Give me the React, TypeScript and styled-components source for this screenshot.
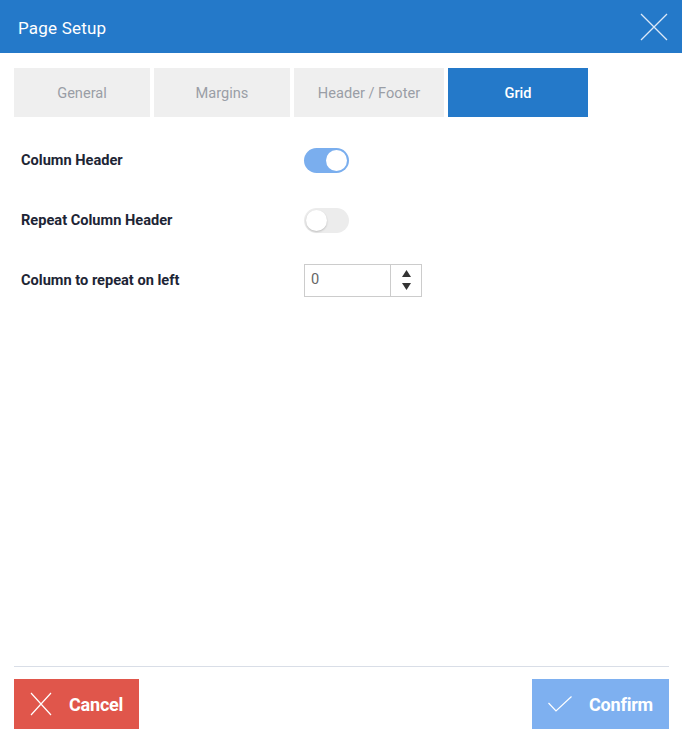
import React, { useState } from 'react'
import styled, { createGlobalStyle } from 'styled-components'

const GlobalStyle = createGlobalStyle`
  html, body {
    margin: 0;
    padding: 0;
    background: #ffffff;
  }
  body {
    font-family: Roboto, "Liberation Sans", sans-serif;
  }
`

const tabs = [
	{ label: 'General', width: 136 },
	{ label: 'Margins', width: 136 },
	{ label: 'Header / Footer', width: 150 },
	{ label: 'Grid', width: 140 },
]

const App = () => {
	const [active, setActive] = useState('Grid')
	const [columnHeader, setColumnHeader] = useState(true)
	const [repeatHeader, setRepeatHeader] = useState(false)
	const [repeatLeft, setRepeatLeft] = useState(0)

	return (
		<>
			<GlobalStyle/>
			<Dialog>
				<TitleBar>
					<Title>Page Setup</Title>
					<CloseButton>
						<svg width='28' height='28' viewBox='0 0 28 28'>
							<path d='M1 1 L27 27 M27 1 L1 27' stroke='#dce9f7' strokeWidth='1.3' fill='none'/>
						</svg>
					</CloseButton>
				</TitleBar>

				<TabRow>
					{ tabs.map(t => (
						<Tab key={ t.label } $width={ t.width } $active={ active === t.label } onClick={ () => setActive(t.label) }>
							{ t.label }
						</Tab>
					)) }
				</TabRow>

				<Body>
					<Row>
						<Label>Column Header</Label>
						<Toggle $on={ columnHeader } onClick={ () => setColumnHeader(!columnHeader) }>
							<Knob $on={ columnHeader }/>
						</Toggle>
					</Row>
					<Row>
						<Label>Repeat Column Header</Label>
						<Toggle $on={ repeatHeader } onClick={ () => setRepeatHeader(!repeatHeader) }>
							<Knob $on={ repeatHeader }/>
						</Toggle>
					</Row>
					<Row>
						<Label>Column to repeat on left</Label>
						<Spinner>
							<SpinInput value={ repeatLeft } readOnly/>
							<SpinButtons>
								<SpinArrow onClick={ () => setRepeatLeft(repeatLeft + 1) }>
									<svg width='9' height='7' viewBox='0 0 9 7'><path d='M4.5 0 L9 7 L0 7 Z' fill='#333'/></svg>
								</SpinArrow>
								<SpinArrow onClick={ () => setRepeatLeft(Math.max(0, repeatLeft - 1)) }>
									<svg width='9' height='7' viewBox='0 0 9 7'><path d='M0 0 L9 0 L4.5 7 Z' fill='#333'/></svg>
								</SpinArrow>
							</SpinButtons>
						</Spinner>
					</Row>
				</Body>

				<Footer>
					<ActionButton $color='#e0564b'>
						<svg width='22' height='24' viewBox='0 0 22 24'>
							<path d='M1 1 L21 23 M21 1 L1 23' stroke='#ffffff' strokeWidth='1.2' fill='none'/>
						</svg>
						Cancel
					</ActionButton>
					<ActionButton $color='#7eb0f0'>
						<svg width='24' height='16' viewBox='0 0 24 16'>
							<path d='M0.5 7 L8 15 L23.5 0.5' stroke='#ffffff' strokeWidth='1.2' fill='none'/>
						</svg>
						Confirm
					</ActionButton>
				</Footer>
			</Dialog>
		</>
	)
}

export default App

const Dialog = styled.div`
  width: 682px;
  height: 740px;
  display: flex;
  flex-direction: column;
  background: #ffffff;
`

const TitleBar = styled.header`
  height: 53px;
  background: #2479c9;
  display: flex;
  align-items: center;
  justify-content: space-between;
  padding: 0 14px 0 18px;
  box-sizing: border-box;
`

const Title = styled.span`
  color: #ffffff;
  font-size: 17px;
  letter-spacing: 0.2px;
  padding-top: 3px;
`

const CloseButton = styled.div`
  width: 28px;
  height: 28px;
  display: flex;
  cursor: pointer;
`

const TabRow = styled.nav`
  display: flex;
  gap: 4px;
  padding: 15px 14px 0;
`

const Tab = styled.div<{ $width: number, $active: boolean }>`
  width: ${ p => p.$width }px;
  height: 49px;
  display: flex;
  align-items: center;
  justify-content: center;
  font-size: 14.6px;
  padding-top: 1px;
  box-sizing: border-box;
  cursor: pointer;
  background: ${ p => p.$active ? '#2479c9' : '#efefef' };
  color: ${ p => p.$active ? '#ffffff' : '#9a9ea6' };
  font-weight: ${ p => p.$active ? 500 : 400 };
`

const Body = styled.section`
  flex: 1;
  display: flex;
  flex-direction: column;
  padding: 13px 21px 0;
`

const Row = styled.div`
  display: grid;
  grid-template-columns: 283px auto;
  align-items: center;
  height: 60px;
`

const Label = styled.label`
  font-size: 14.6px;
  font-weight: 700;
  color: #1d2535;
`

const Toggle = styled.div<{ $on: boolean }>`
  width: 45px;
  height: 25px;
  border-radius: 13px;
  background: ${ p => p.$on ? '#7aaeee' : '#ececec' };
  display: flex;
  align-items: center;
  justify-content: ${ p => p.$on ? 'flex-end' : 'flex-start' };
  padding: 0 2px;
  box-sizing: border-box;
  cursor: pointer;
`

const Knob = styled.div<{ $on: boolean }>`
  width: 21px;
  height: 21px;
  border-radius: 50%;
  background: #ffffff;
  box-shadow: ${ p => p.$on ? 'none' : '0 1px 2px rgba(0,0,0,0.2)' };
`

const Spinner = styled.div`
  width: 118px;
  height: 33px;
  display: flex;
  border: 1px solid #cccccc;
  box-sizing: border-box;
`

const SpinInput = styled.input`
  width: 86px;
  border: none;
  border-right: 1px solid #cccccc;
  padding: 0 0 2px 6px;
  box-sizing: border-box;
  font-family: Roboto, "Liberation Sans", sans-serif;
  font-size: 14.6px;
  color: #666666;
  outline: none;
`

const SpinButtons = styled.div`
  flex: 1;
  display: flex;
  flex-direction: column;
  justify-content: center;
  align-items: center;
  gap: 6px;
`

const SpinArrow = styled.div`
  display: flex;
  cursor: pointer;
`

const Footer = styled.footer`
  display: flex;
  justify-content: space-between;
  margin: 0 13px 11px 14px;
  padding-top: 12px;
  border-top: 1px solid #d9dee7;
`

const ActionButton = styled.button<{ $color: string }>`
  height: 50px;
  display: flex;
  align-items: center;
  gap: 17px;
  padding: 0 16px;
  border: none;
  background: ${ p => p.$color };
  color: #ffffff;
  font-family: Roboto, "Liberation Sans", sans-serif;
  font-size: 18px;
  font-weight: 700;
  letter-spacing: -0.2px;
  cursor: pointer;
`
